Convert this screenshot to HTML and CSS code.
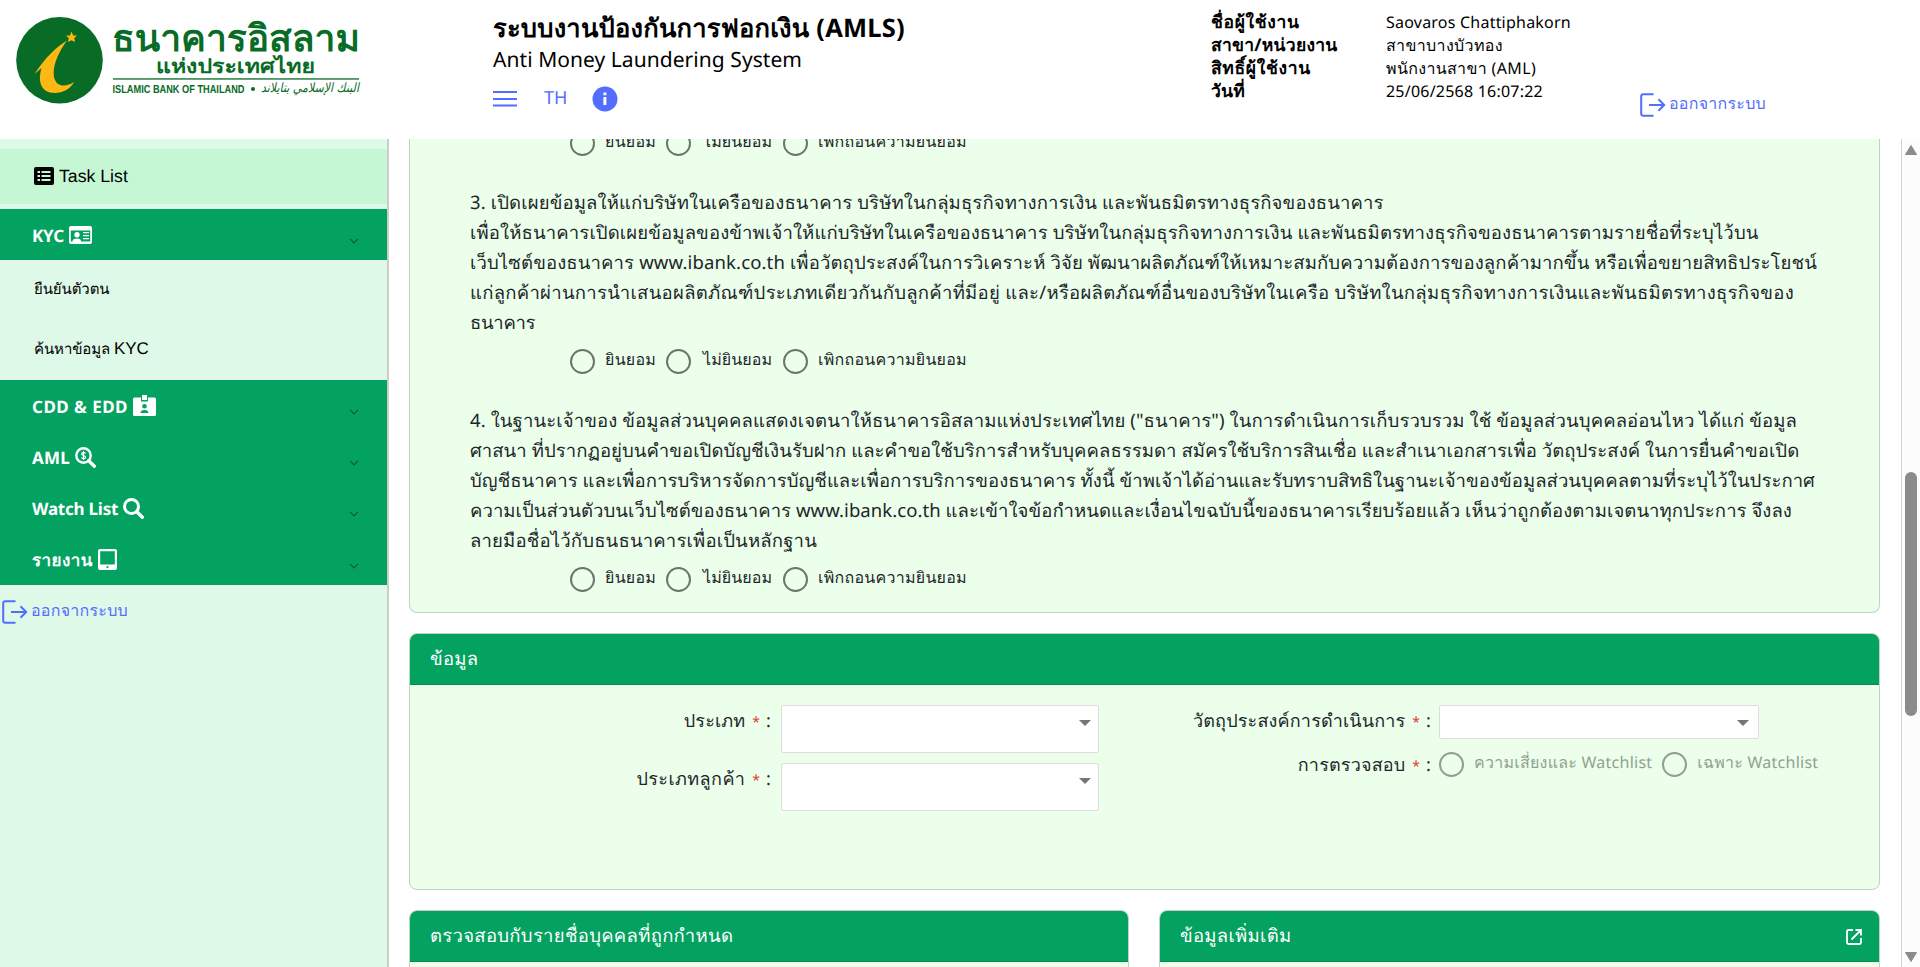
FILE: index.html
```html
<!DOCTYPE html>
<html lang="th">
<head>
<meta charset="utf-8">
<title>AMLS</title>
<link rel="stylesheet" href="styles.css">
</head>
<body>
<svg class="defs" width="0" height="0">
  <symbol id="exit" viewBox="0 0 26 24"><path d="M13.5 1.2H3.4Q1.2 1.2 1.2 3.4V20.6Q1.2 22.8 3.4 22.8H13.5" fill="none" stroke="currentColor" stroke-width="2"/><path d="M9 12H24M18.5 6.3L24.2 12L18.5 17.7" fill="none" stroke="currentColor" stroke-width="2"/></symbol>
  <symbol id="chev" viewBox="0 0 10 6"><path d="M1 .8L5 4.8L9 .8" fill="none" stroke="#0b5a2c" stroke-width="1.2"/></symbol>
</svg>
<header class="top">
  <svg class="logo" viewBox="0 0 400 138">
    <circle cx="59.5" cy="60.3" r="43.3" fill="#086b26"/>
    <path d="M71.500 31.500L73.200 35.500L77 35.600L74.200 38.200L75 42L71.400 40.200L68 42L68.800 38.200L66 35.600L70 35.400Z" fill="#fdb813"/>
    <path d="M67 40.500C56 47 45 58 34.500 74L41.500 68C38 80 40 90 50 92.500C60 94.500 70 90 74 82C67 87 58 87 55 80C51 70 57 54 67 40.500Z" fill="#fdb813"/>
    <g fill="#086b26" font-weight="700">
      <text x="112" y="51" font-size="37" textLength="248" lengthAdjust="spacingAndGlyphs">ธนาคารอิสลาม</text>
      <text x="156" y="73" font-size="20" textLength="159" lengthAdjust="spacingAndGlyphs">แห่งประเทศไทย</text>
      <rect x="113" y="78.300" width="246" height="1.300"/>
      <text class="latin" x="112.500" y="92.500" font-size="11.500" textLength="132" lengthAdjust="spacingAndGlyphs">ISLAMIC BANK OF THAILAND</text>
      <circle cx="253" cy="89" r="2"/>
      <text class="arabic" x="359" y="92" font-size="13" direction="rtl" textLength="98" lengthAdjust="spacingAndGlyphs">البنك الإسلامي بتايلاند</text>
    </g>
  </svg>
  <div class="title">
    <h1>ระบบงานป้องกันการฟอกเงิน (AMLS)</h1>
    <p>Anti Money Laundering System</p>
    <div class="tools">
      <svg width="24" height="18" viewBox="0 0 24 18"><path d="M0 2H24M0 9H24M0 15.500H24" stroke="#536dfe" stroke-width="2.200"/></svg>
      <span class="lang">TH</span>
      <svg width="26" height="26" viewBox="0 0 26 26"><circle cx="13" cy="13" r="12.500" fill="#536dfe"/><path d="M11.400 6.500h3v2.700h-3zM11.400 11h3v8h-3z" fill="#fff"/></svg>
    </div>
  </div>
  <dl class="user">
    <dt class="wide">ชื่อผู้ใช้งาน</dt><dd>Saovaros Chattiphakorn</dd>
    <dt>สาขา/หน่วยงาน</dt><dd class="thai">สาขาบางบัวทอง</dd>
    <dt class="wide">สิทธิ์ผู้ใช้งาน</dt><dd class="thai">พนักงานสาขา (AML)</dd>
    <dt>วันที่</dt><dd>25/06/2568 16:07:22</dd>
  </dl>
  <a class="logout"><svg width="26" height="24"><use href="#exit"/></svg><span>ออกจากระบบ</span></a>
</header>
<div class="body">
  <nav class="side">
    <a class="task"><svg width="20" height="18" viewBox="0 0 20 18"><rect width="20" height="18" rx="2"/><path fill="#c6f7d4" d="M3.500 4h2.500v2H3.500zM3.500 8h2.500v2H3.500zM3.500 12h2.500v2H3.500zM7.500 4h9v2h-9zM7.500 8h9v2h-9zM7.500 12h9v2h-9z"/></svg>Task List</a>
    <div class="grp"><span class="tight">KYC</span><svg width="23" height="18" viewBox="0 0 23 18"><path fill="#fff" fill-rule="evenodd" d="M2 0H21a2 2 0 0 1 2 2V16a2 2 0 0 1-2 2H2a2 2 0 0 1-2-2V2a2 2 0 0 1 2-2ZM1.800 4.500V15.500H3.500C3.500 13.500 5 12.500 8 12.500S12 13.500 12 15.500H21.200V4.500ZM14 6h6v1.300h-6zM14 9h6v1.300h-6zM14 12h6v1.300h-6zM8 6a2.700 2.700 0 1 1 0 5.400A2.700 2.700 0 0 1 8 6Z"/></svg><svg class="cv"><use href="#chev"/></svg></div>
    <a class="sub">ยืนยันตัวตน</a>
    <a class="sub"><span>ค้นหาข้อมูล <span class="en">KYC</span></span></a>
    <div class="grp"><span class="loose">CDD &amp; EDD</span><svg width="23" height="21" viewBox="0 0 23 21"><path fill="#fff" fill-rule="evenodd" d="M9 0h5v5h-5zM1.500 2.500H8V6.500H15V2.500H21.500A1.500 1.500 0 0 1 23 4V19.500A1.500 1.500 0 0 1 21.500 21H1.500A1.500 1.500 0 0 1 0 19.500V4A1.500 1.500 0 0 1 1.500 2.500ZM11.500 9a2.300 2.300 0 1 1 0 4.600A2.300 2.300 0 0 1 11.500 9ZM7.500 18C7.500 16 9 15 11.500 15S15.500 16 15.500 18Z"/></svg><svg class="cv"><use href="#chev"/></svg></div>
    <div class="grp"><span>AML</span><svg width="21" height="21" viewBox="0 0 21 21"><circle cx="8.500" cy="8.500" r="7.200" fill="none" stroke="#fff" stroke-width="2.400"/><path d="M13.800 13.800L19.300 19.300" stroke="#fff" stroke-width="3.400" stroke-linecap="round"/><path d="M10.600 6.300C9.800 5.400 6.600 5.200 6.600 7S10.600 8.200 10.600 10.200S7.300 11.700 6.300 10.700M8.500 4v9" fill="none" stroke="#fff" stroke-width="1.200"/></svg><svg class="cv"><use href="#chev"/></svg></div>
    <div class="grp"><span class="tight">Watch List</span><svg width="21" height="21" viewBox="0 0 21 21"><circle cx="8.500" cy="8.500" r="7" fill="none" stroke="#fff" stroke-width="3"/><path d="M13.800 13.800L19.300 19.300" stroke="#fff" stroke-width="3.400" stroke-linecap="round"/></svg><svg class="cv"><use href="#chev"/></svg></div>
    <div class="grp"><span class="loose">รายงาน</span><svg width="19" height="21" viewBox="0 0 19 21"><path fill="#fff" fill-rule="evenodd" d="M2 0H17a2 2 0 0 1 2 2V19a2 2 0 0 1-2 2H2a2 2 0 0 1-2-2V2a2 2 0 0 1 2-2ZM2.200 2.300V15.500H16.800V2.300ZM9.500 17a1.100 1.100 0 1 1 0 2.200A1.100 1.100 0 0 1 9.500 17Z"/></svg><svg class="cv"><use href="#chev"/></svg></div>
    <a class="out"><svg width="26" height="24"><use href="#exit"/></svg><span>ออกจากระบบ</span></a>
  </nav>
  <main>
    <section class="card consent">
      <div class="radios"><i></i><span class="yes">ยินยอม</span><i></i><span class="no">ไม่ยินยอม</span><i></i><span>เพิกถอนความยินยอม</span></div>
      <div class="para share">
        <p>3. เปิดเผยข้อมูลให้แก่บริษัทในเครือของธนาคาร บริษัทในกลุ่มธุรกิจทางการเงิน และพันธมิตรทางธุรกิจของธนาคาร</p>
        <p>เพื่อให้ธนาคารเปิดเผยข้อมูลของข้าพเจ้าให้แก่บริษัทในเครือของธนาคาร บริษัทในกลุ่มธุรกิจทางการเงิน และพันธมิตรทางธุรกิจของธนาคารตามรายชื่อที่ระบุไว้บน</p>
        <p>เว็บไซต์ของธนาคาร www.ibank.co.th เพื่อวัตถุประสงค์ในการวิเคราะห์ วิจัย พัฒนาผลิตภัณฑ์ให้เหมาะสมกับความต้องการของลูกค้ามากขึ้น หรือเพื่อขยายสิทธิประโยชน์</p>
        <p class="loose">แก่ลูกค้าผ่านการนำเสนอผลิตภัณฑ์ประเภทเดียวกันกับลูกค้าที่มีอยู่ และ/หรือผลิตภัณฑ์อื่นของบริษัทในเครือ บริษัทในกลุ่มธุรกิจทางการเงินและพันธมิตรทางธุรกิจของ</p>
        <p class="tight">ธนาคาร</p>
      </div>
      <div class="radios"><i></i><span class="yes">ยินยอม</span><i></i><span class="no">ไม่ยินยอม</span><i></i><span>เพิกถอนความยินยอม</span></div>
      <div class="para owner">
        <p class="first">4. ในฐานะเจ้าของ ข้อมูลส่วนบุคคลแสดงเจตนาให้ธนาคารอิสลามแห่งประเทศไทย ("ธนาคาร") ในการดำเนินการเก็บรวบรวม ใช้ ข้อมูลส่วนบุคคลอ่อนไหว ได้แก่ ข้อมูล</p>
        <p>ศาสนา ที่ปรากฏอยู่บนคำขอเปิดบัญชีเงินรับฝาก และคำขอใช้บริการสำหรับบุคคลธรรมดา สมัครใช้บริการสินเชื่อ และสำเนาเอกสารเพื่อ วัตถุประสงค์ ในการยื่นคำขอเปิด</p>
        <p>บัญชีธนาคาร และเพื่อการบริหารจัดการบัญชีและเพื่อการบริการของธนาคาร ทั้งนี้ ข้าพเจ้าได้อ่านและรับทราบสิทธิในฐานะเจ้าของข้อมูลส่วนบุคคลตามที่ระบุไว้ในประกาศ</p>
        <p>ความเป็นส่วนตัวบนเว็บไซต์ของธนาคาร www.ibank.co.th และเข้าใจข้อกำหนดและเงื่อนไขฉบับนี้ของธนาคารเรียบร้อยแล้ว เห็นว่าถูกต้องตามเจตนาทุกประการ จึงลง</p>
        <p class="last">ลายมือชื่อไว้กับธนธนาคารเพื่อเป็นหลักฐาน</p>
      </div>
      <div class="radios"><i></i><span class="yes">ยินยอม</span><i></i><span class="no">ไม่ยินยอม</span><i></i><span>เพิกถอนความยินยอม</span></div>
    </section>
    <section class="card info">
      <h2><span>ข้อมูล</span></h2>
      <div class="form">
        <div class="col">
          <div class="row tallrow"><label>ประเภท <b>*</b> :</label><div class="sel tall"></div></div>
          <div class="row tallrow"><label><span class="loose">ประเภทลูกค้า</span> <b>*</b> :</label><div class="sel tall"></div></div>
        </div>
        <div class="col right">
          <div class="row"><label>วัตถุประสงค์การดำเนินการ <b>*</b> :</label><div class="sel"></div></div>
          <div class="row"><label>การตรวจสอบ <b>*</b> :</label><div class="radios disabled"><i></i><span class="yes">ความเสี่ยงและ Watchlist</span><i></i><span>เฉพาะ Watchlist</span></div></div>
        </div>
      </div>
    </section>
    <div class="pair">
      <section class="card"><h2><span>ตรวจสอบกับรายชื่อบุคคลที่ถูกกำหนด</span></h2></section>
      <section class="card"><h2><span>ข้อมูลเพิ่มเติม</span><svg width="16" height="16" viewBox="0 0 16 16"><path d="M7 1H2.500Q1 1 1 2.500V13.500Q1 15 2.500 15H13.500Q15 15 15 13.500V9M9.500 1H15V6.500M15 1L5.500 10.500" fill="none" stroke="#fff" stroke-width="1.800"/></svg></h2></section>
    </div>
  </main>
  <div class="bar">
    <svg width="12" height="10" viewBox="0 0 12 10"><path d="M6 .5L11.500 9.500H.5Z" fill="#8b8b8b" stroke="#8b8b8b" stroke-linejoin="round"/></svg>
    <div class="thumb"></div>
    <svg width="12" height="10" viewBox="0 0 12 10"><path d="M6 9.500L11.500 .5H.5Z" fill="#8b8b8b" stroke="#8b8b8b" stroke-linejoin="round"/></svg>
  </div>
</div>
</body>
</html>
```
FILE: styles.css
```css
* { box-sizing: border-box; }
body { margin: 0; height: 967px; overflow: hidden; background: #fff; color: #212529; font-family: "Noto Sans", sans-serif; font-size: 18.5px; text-rendering: geometricPrecision; white-space: nowrap; }
h1, h2, p, dl, dd { margin: 0; }
.defs { position: absolute; }

/* header */
.top { height: 139px; display: flex; color: #000; }
.logo { width: 400px; height: 138px; flex: none; margin-right: 93px; }
.latin { font-family: "Liberation Sans", sans-serif; }
.arabic { font-family: "DejaVu Sans", sans-serif; font-style: italic; font-weight: 400; }
.title { width: 718px; padding-top: 10px; }
.title h1 { font-size: 25.5px; line-height: 36px; font-weight: 700; letter-spacing: .229px; }
.title p { font-size: 21px; line-height: 29px; letter-spacing: .054px; }
.tools { display: flex; align-items: center; gap: 27px; height: 26px; margin-top: 11px; color: #536dfe; }
.lang { font-size: 18px; width: 24px; margin: -2px -3px 0 0; }
.user { display: grid; grid-template-columns: 175px 254px; grid-auto-rows: 23px; line-height: 23px; padding-top: 11px; font-size: 16px; }
.user dt { font-weight: 700; font-size: 17.5px; letter-spacing: .25px; }
.user dt.wide { letter-spacing: .65px; }
.user dd { letter-spacing: .22px; }
.user dd.thai { letter-spacing: .35px; }
.logout, .out { display: flex; align-items: center; gap: 3px; color: #536dfe; font-size: 16px; letter-spacing: .255px; }
.logout span, .out span { margin-top: -2px; }
.logout { height: 24px; margin-top: 93px; }

/* sidebar */
.body { display: flex; height: 828px; }
.side { width: 389px; border-right: 2px solid #ccc; background: #dff9e9; padding-top: 10px; color: #000; }
.task { display: flex; align-items: center; gap: 5px; height: 55px; margin-bottom: 5px; padding: 0 0 1px 34px; background: #c6f7d4; font: 17.7px "Liberation Sans", sans-serif; }
.grp { display: flex; align-items: center; height: 51.25px; padding: 0 28px 0 32px; gap: 5px; background: #04a261; color: #fff; font-weight: 700; font-size: 17px; letter-spacing: .229px; }
.grp span { margin-top: 1px; }
.grp .tight { letter-spacing: -.22px; }
.grp .loose { letter-spacing: .47px; }
.cv { width: 10px; height: 6px; margin: 12px 0 0 auto; }
.sub { display: flex; align-items: center; height: 60px; padding: 0 0 3px 34px; font-size: 15px; letter-spacing: -.1px; }
.en { font: 17px "Liberation Sans", sans-serif; }
.out { height: 24px; margin: 15px 0 0 2px; }

/* content */
main { width: 1512px; padding: 0 21px 0 20px; overflow: hidden; }
.card { border: 1px solid #bed3c2; border-radius: 8px; background: #ebffeb; overflow: hidden; }
.consent { height: 474px; border-top: 0; border-radius: 0 0 8px 8px; padding-left: 60px; }
.radios { display: flex; align-items: center; height: 26px; padding-left: 100px; margin-top: -9px; font-size: 16px; letter-spacing: .25px; }
.radios i { width: 25px; height: 25px; border: 2px solid #6b766b; border-radius: 50%; margin-right: 10px; flex: none; }
.radios span { margin-top: -1px; }
.radios .yes { margin-right: 10px; }
.radios .no { margin: -1px 11px 0 2px; letter-spacing: .08px; }
.para { padding-top: 32px; }
.para p { height: 30px; line-height: 30px; }
.share { letter-spacing: .136px; }
.share .loose { letter-spacing: .281px; }
.share .tight { letter-spacing: -.3px; }
.owner { letter-spacing: .062px; }
.owner .first { letter-spacing: .117px; }
.owner .last { letter-spacing: .178px; }
.para + .radios { margin-top: 10px; }
.info { height: 257px; margin-top: 20px; }
.card h2 { display: flex; align-items: center; justify-content: space-between; height: 51px; padding: 1px 17px 0 20px; background: #04a261; border-bottom: 1px solid #038a52; color: #fff; font-size: 18.5px; font-weight: 400; letter-spacing: .29px; }
.form { display: flex; padding-top: 20px; }
.col { width: 689px; }
.right { width: 760px; }
.row { display: flex; height: 44px; }
.tallrow { height: 58px; }
label { width: 361px; margin-right: 9px; text-align: right; line-height: 32px; font-size: 18px; letter-spacing: .17px; flex: none; }
label .loose { letter-spacing: .427px; }
.right label { width: 332px; margin-right: 8px; }
label b { color: #e53935; font-weight: 400; font-size: 14px; margin: 0 1px 0 2px; }
.sel { width: 320px; height: 34px; border: 1px solid #ddd; border-radius: 2px; background: #fff; }
.sel::after { content: ""; display: block; margin: 14px 0 0 297px; width: 0; border: 6px solid transparent; border-top-color: #757575; }
.tall { width: 319px; height: 48px; margin-left: 1px; }
.tall::after { margin-left: 297px; }
.disabled { padding: 0; margin-top: 2px; color: #919f91; }
.disabled i { border-color: #919f91; }
.pair { display: grid; grid-template-columns: 720px 721px; gap: 30px; margin-top: 20px; }
.pair .card { height: 80px; }

/* scrollbar */
.bar { width: 19px; border-left: 1px solid #d4d4d4; background: #fcfcfc; display: flex; flex-direction: column; align-items: center; padding: 6px 0 5px; }
.thumb { width: 12px; height: 244px; border-radius: 6px; background: #8b8b8b; margin: 317px 0 auto; }
```
